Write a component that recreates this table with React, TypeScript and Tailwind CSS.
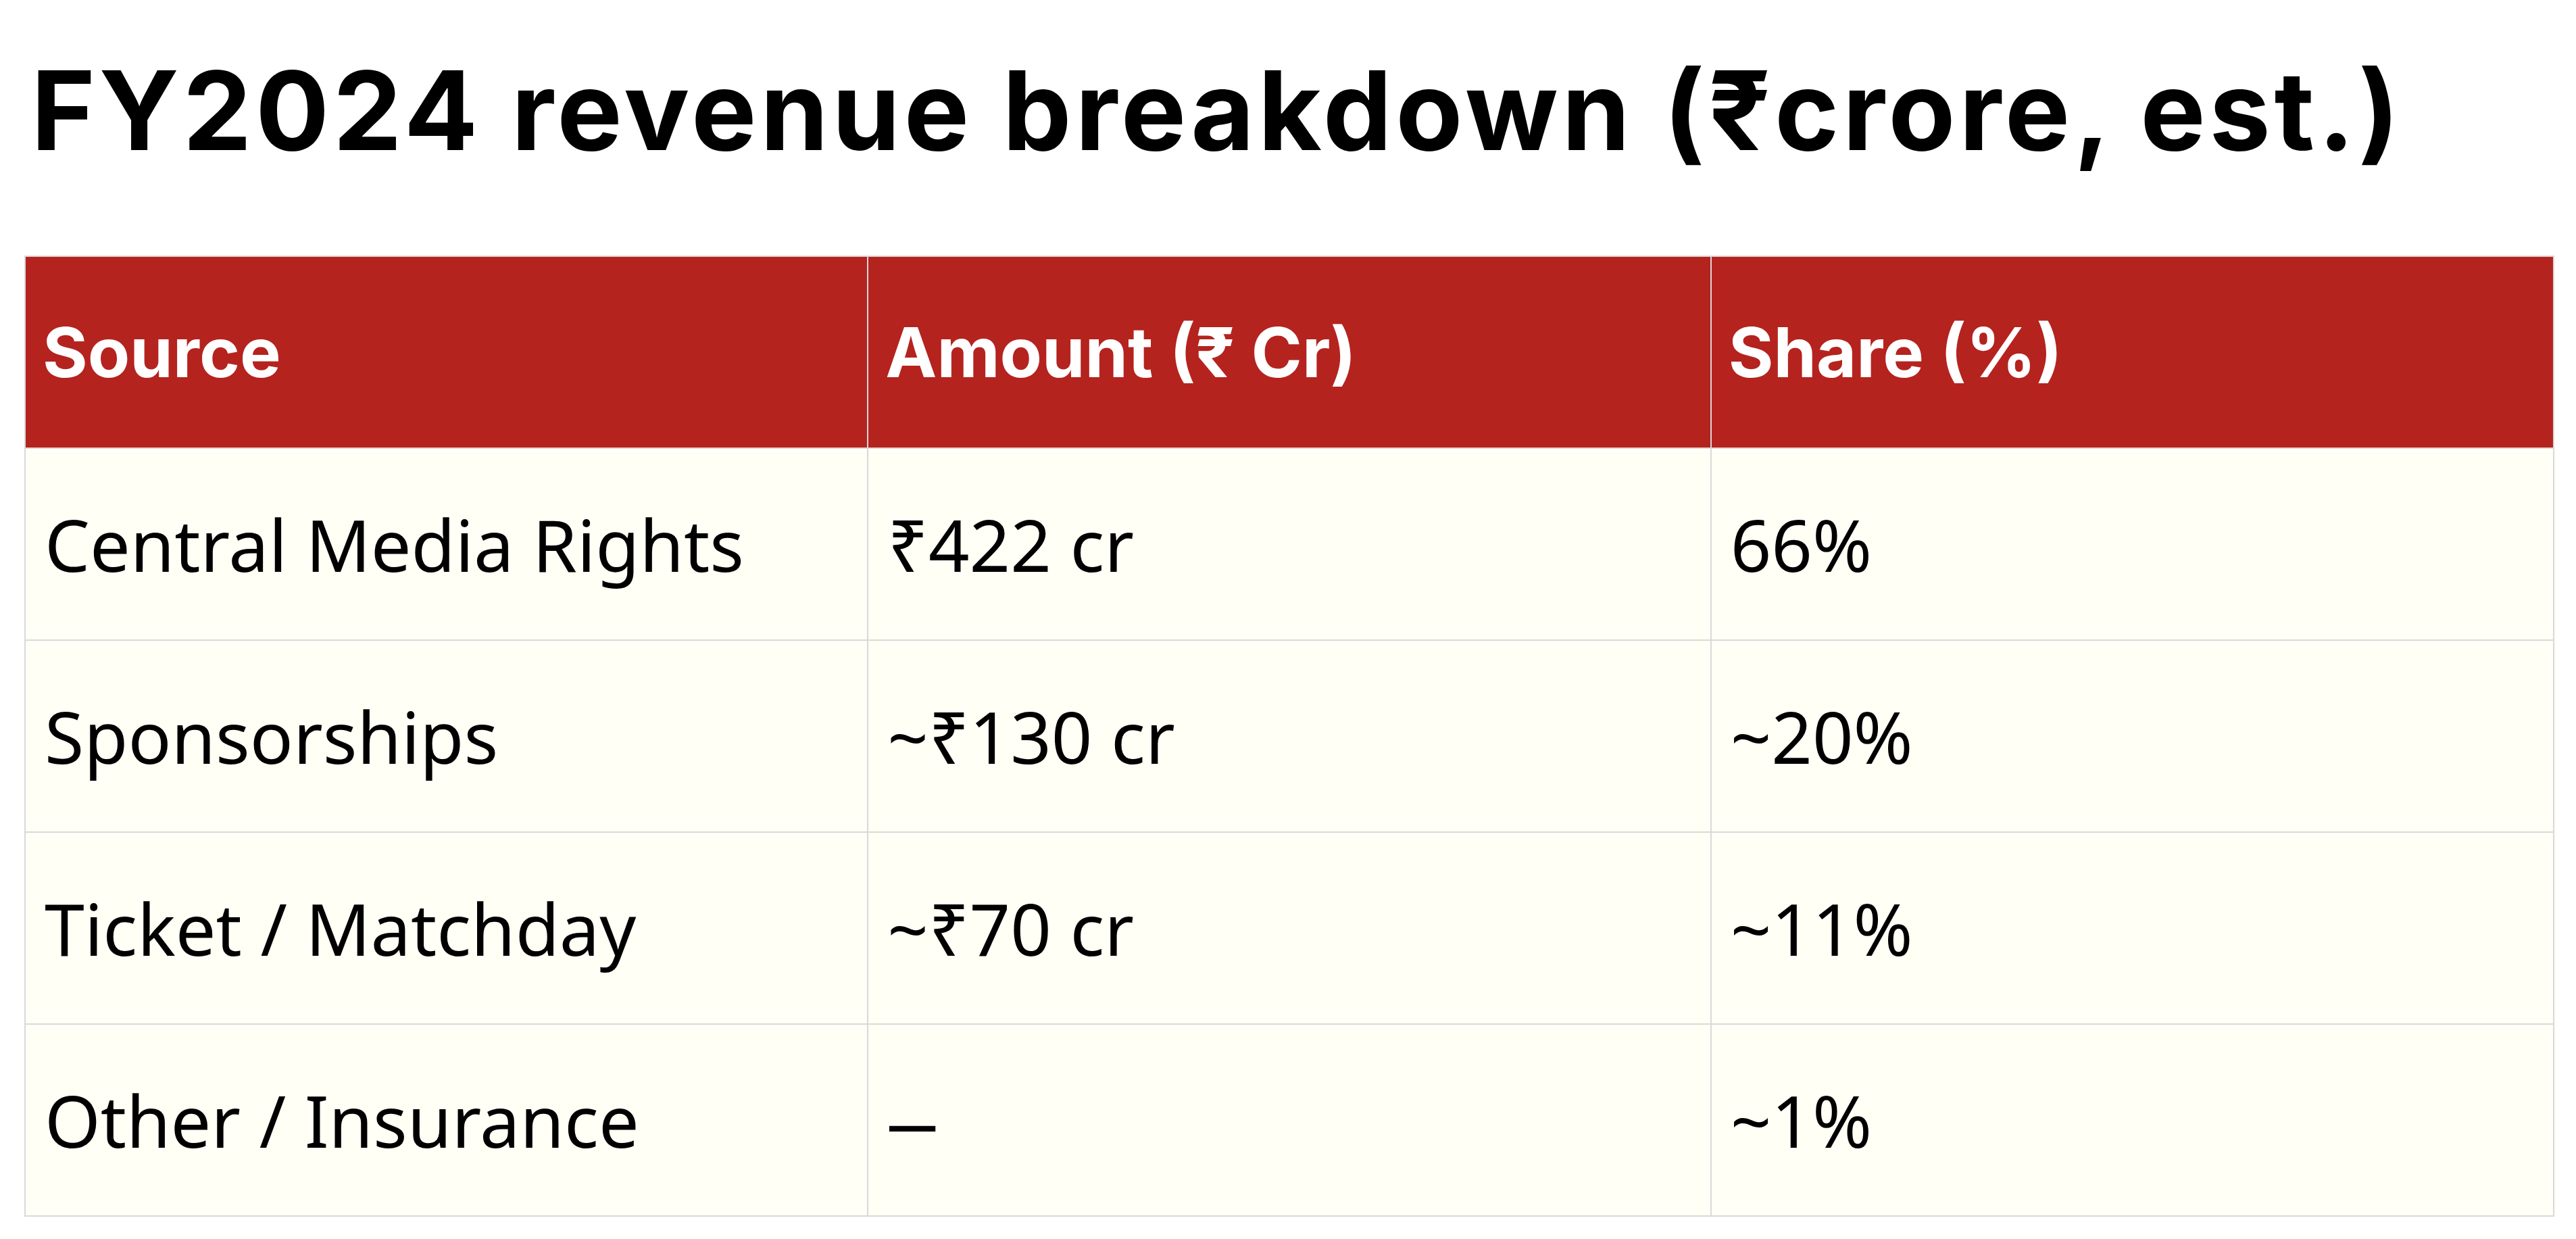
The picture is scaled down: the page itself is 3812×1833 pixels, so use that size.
import React from "react";

const rows = [
  ["Central Media Rights", "₹422 cr", "66%"],
  ["Sponsorships", "~₹130 cr", "~20%"],
  ["Ticket / Matchday", "~₹70 cr", "~11%"],
  ["Other / Insurance", "—", "~1%"],
];

export default function App() {
  return (
    <div className="w-[3812px] h-[1833px] bg-white pl-[36px] pr-[32px] overflow-hidden">
      <h1
        className="pt-[82px] mb-[134px] text-[162px] leading-none font-bold text-black pl-[10px] tracking-[5.5px]"
        style={{ fontFamily: "Inter, 'Noto Sans', sans-serif" }}
      >
        FY2024 revenue breakdown (₹crore, est.)
      </h1>
      <table className="w-[3744px] border-collapse table-fixed">
        <thead>
          <tr className="h-[284px] bg-[#b5231f]">
            {["Source", "Amount (₹ Cr)", "Share (%)"].map((h) => (
              <th
                key={h}
                className="border-2 border-[#d9d9d9] px-[25px] text-left align-middle text-white font-bold text-[102px]"
                style={{ fontFamily: "Inter, 'Noto Sans', sans-serif" }}
              >
                {h}
              </th>
            ))}
          </tr>
        </thead>
        <tbody>
          {rows.map((r) => (
            <tr key={r[0]} className="h-[284px] bg-[#fffff6]">
              {r.map((c, i) => (
                <td
                  key={i}
                  className="border-2 border-[#d9d9d9] px-[28px] align-middle text-black text-[106px]"
                  style={{ fontFamily: "'Noto Sans', sans-serif" }}
                >
                  {c === "—" ? (
                    <span className="inline-block scale-x-70 origin-left">—</span>
                  ) : (
                    c
                  )}
                </td>
              ))}
            </tr>
          ))}
        </tbody>
      </table>
    </div>
  );
}
